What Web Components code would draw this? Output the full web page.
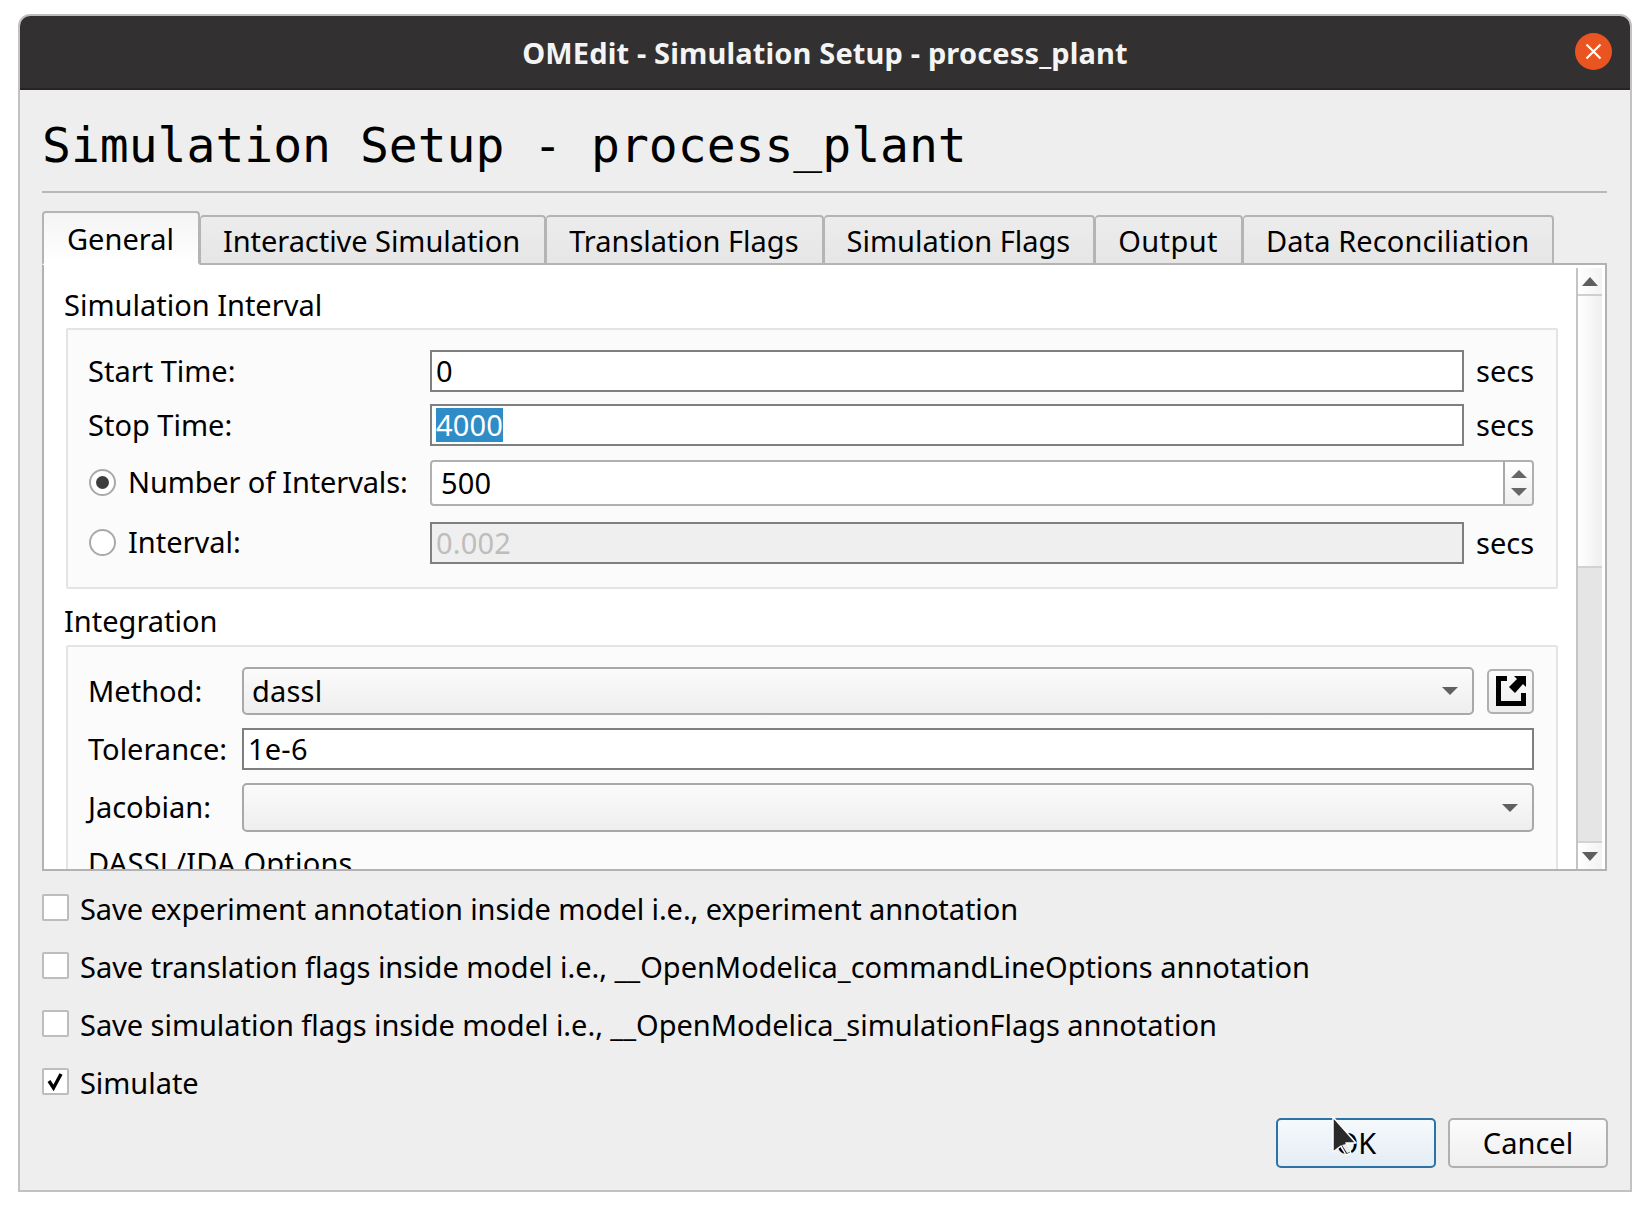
<!DOCTYPE html>
<html>
<head>
<meta charset="utf-8">
<title>OMEdit - Simulation Setup</title>
<style>
  html, body { margin: 0; background: #fff; }
  body { font: 29px "Noto Sans", "Open Sans", sans-serif; color: #000; }
</style>
</head>
<body>
<om-dialog heading="OMEdit - Simulation Setup - process_plant">
  <om-page-title>Simulation Setup - process_plant</om-page-title>
  <om-tabbar>
    <om-tab active>General</om-tab>
    <om-tab style="letter-spacing:-.05px; padding-right:24px">Interactive Simulation</om-tab>
    <om-tab>Translation Flags</om-tab>
    <om-tab>Simulation Flags</om-tab>
    <om-tab style="letter-spacing:.4px">Output</om-tab>
    <om-tab style="letter-spacing:.1px">Data Reconciliation</om-tab>
  </om-tabbar>
  <om-pane>
    <om-section heading="Simulation Interval" style="--cols: 341px 1034px 70px; --pad-bottom: 23px; --gap-y: 12px; --head-lh: 40px">
      <om-label>Start Time:</om-label>
      <om-input value="0"></om-input>
      <om-label class="unit">secs</om-label>
      <om-label>Stop Time:</om-label>
      <om-input value="4000" selected></om-input>
      <om-label class="unit">secs</om-label>
      <om-radio checked style="letter-spacing:-.15px; margin-bottom: 3px">Number of Intervals:</om-radio>
      <om-spin value="500"></om-spin>
      <om-radio style="margin-bottom: 1px">Interval:</om-radio>
      <om-input value="0.002" disabled></om-input>
      <om-label class="unit">secs</om-label>
    </om-section>
    <om-section heading="Integration" style="--cols: 153px 1fr; --gap-y: 13px; margin-top: 13px">
      <om-label>Method:</om-label>
      <om-method-row>
        <om-combo value="dassl" style="--h:48px"></om-combo>
        <om-icon-button></om-icon-button>
      </om-method-row>
      <om-label>Tolerance:</om-label>
      <om-input value="1e-6"></om-input>
      <om-label>Jacobian:</om-label>
      <om-combo style="--h:49px"></om-combo>
      <om-label class="wide">DASSL/IDA Options</om-label>
    </om-section>
  </om-pane>
  <om-checks>
    <om-check style="letter-spacing:-.08px">Save experiment annotation inside model i.e., experiment annotation</om-check>
    <om-check style="letter-spacing:-.025px">Save translation flags inside model i.e., __OpenModelica_commandLineOptions annotation</om-check>
    <om-check style="letter-spacing:-.04px">Save simulation flags inside model i.e., __OpenModelica_simulationFlags annotation</om-check>
    <om-check checked>Simulate</om-check>
  </om-checks>
  <om-buttons>
    <om-button focused>OK</om-button>
    <om-button>Cancel</om-button>
  </om-buttons>
  <om-cursor></om-cursor>
</om-dialog>

<script>
// little helper, every element here is just a shadow root with its own style
function define(name, html) {
  customElements.define(name, class extends HTMLElement {
    constructor() {
      super();
      this.attachShadow({ mode: 'open' });
    }
    connectedCallback() {
      this.shadowRoot.innerHTML = typeof html === 'function' ? html(this) : html;
    }
  });
}

define('om-dialog', el => `
  <style>
    :host { display: block; position: relative; box-sizing: border-box; width: 1614px; height: 1178px; margin: 14px 0 0 18px;
      border: 2px solid #c2c2c2; border-top-color: #bdbdbd; border-radius: 12px 12px 0 0; background: #eee; }
    header { display: flex; align-items: center; justify-content: center; position: relative; box-sizing: border-box; height: 74px; padding-top: 1px;
      background: #323031; border-bottom: 2px solid #262425; border-radius: 10px 10px 0 0;
      color: #f4f4f4; font-weight: 700; font-size: 29px; letter-spacing: .15px; }
    .close { position: absolute; right: 18px; top: 17px; width: 37px; height: 37px; }
    main { display: flex; flex-direction: column; padding: 0 23px 0 22px; }
  </style>
  <header>
    <span>${el.getAttribute('heading')}</span>
    <svg class="close" viewBox="0 0 37 37"><circle cx="18.5" cy="18.5" r="18.5" fill="#e95420"/>
      <path d="M11.5 11.5l14 14M25.5 11.5l-14 14" stroke="#fff" stroke-width="2.2" fill="none"/></svg>
  </header>
  <main><slot></slot></main>`);

define('om-page-title', `
  <style>
    :host { display: block; height: 103px; box-sizing: border-box; padding-top: 25px; border-bottom: 2px solid #b8b8b8;
      font: 48px/60px "DejaVu Sans Mono", monospace; color: #000; white-space: nowrap; }
  </style><slot></slot>`);

define('om-tabbar', `
  <style>
    :host { display: flex; align-items: flex-end; height: 54px; margin: 18px 0 -2px; position: relative; z-index: 1; }
  </style><slot></slot>`);

define('om-tab', `
  <style>
    :host { display: flex; align-items: center; box-sizing: border-box; height: 50px; padding: 0 23px 0 22px;
      border: 2px solid #b4b4b4; border-left-width: 1px; border-radius: 4px 4px 0 0;
      background: linear-gradient(#ececec, #e6e6e6); white-space: nowrap; }
    :host([active]) { height: 54px; padding: 0 24px 0 23px; background: linear-gradient(#f4f4f4, #fff); border-bottom-color: #fff; border-left-width: 2px; }
  </style><slot></slot>`);

define('om-pane', `
  <style>
    :host { display: flex; box-sizing: border-box; height: 608px; border: 2px solid #b2b2b2; background: #fff; overflow: hidden; }
    .body { flex: 1; min-width: 0; padding: 20px 0 0 20px; overflow: hidden; }
    .bar { display: flex; flex-direction: column; box-sizing: border-box; width: 29px; flex: none; margin-top: 3px; padding-right: 3px; border-left: 2px solid #c4c4c4; }
    .btn { display: flex; align-items: center; justify-content: center; height: 26px; flex: none; border-bottom: 2px solid #cfcfcf; background: linear-gradient(90deg, #fff, #f2f2f2); }
    .track { height: 270px; flex: none; background: linear-gradient(90deg, #fff, #efefef); }
    .thumb { flex: 1; background: #e5e5e5; border-top: 2px solid #d2d2d2; }
    .down { border-bottom: 0; border-top: 2px solid #d2d2d2; }
    svg { width: 16px; height: 9px; fill: #5e5e5e; }
  </style>
  <div class="body"><slot></slot></div>
  <div class="bar">
    <div class="btn"><svg viewBox="0 0 16 9"><path d="M8 0l8 9H0z"/></svg></div>
    <div class="track"></div>
    <div class="thumb"></div>
    <div class="btn down"><svg viewBox="0 0 16 9"><path d="M0 0h16l-8 9z"/></svg></div>
  </div>`);

define('om-section', el => `
  <style>
    :host { display: block; margin-right: 18px; }
    h4 { margin: 0; height: 43px; font: inherit; line-height: var(--head-lh, 38px); }
    .box { display: grid; grid-template-columns: var(--cols); row-gap: var(--gap-y, 12px); align-items: center;
      box-sizing: border-box; margin-left: 2px; padding: 20px 22px var(--pad-bottom, 0) 21px;
      border: 2px solid #e4e4e4; border-radius: 2px; background: #fbfbfb; }
  </style>
  <h4>${el.getAttribute('heading')}</h4>
  <div class="box"><slot></slot></div>`);

define('om-label', `
  <style>
    :host { display: block; margin-left: -1px; padding-bottom: 2px; white-space: nowrap; }
    :host(.unit) { margin-left: 0; padding-left: 12px; }
    :host(.wide) { grid-column: 1 / -1; margin-top: -2px; letter-spacing: .2px; }
  </style><slot></slot>`);

define('om-input', el => `
  <style>
    :host { display: block; box-sizing: border-box; height: 42px; border: 2px solid #7f7f7f; background: #fff;
      padding-left: 4px; line-height: 38px; letter-spacing: .2px; }
    :host([disabled]) { background: #efefef; color: #bdbdbd; }
    :host([selected]) span { display: inline-block; height: 34px; line-height: 33px; margin-top: 2px; vertical-align: top; background: #308cc6; color: #fff; }
  </style><span>${el.getAttribute('value')}</span>`);

define('om-spin', el => `
  <style>
    :host { display: flex; grid-column: 2 / 4; box-sizing: border-box; height: 46px; margin: 2px 0 4px; border: 2px solid #b0b0b0; border-radius: 4px; background: #fff; }
    span { flex: 1; padding-left: 9px; line-height: 42px; letter-spacing: .2px; }
    .arrows { display: flex; flex-direction: column; align-items: center; justify-content: center; gap: 10px; width: 27px;
      border-left: 2px solid #a8a8a8; background: linear-gradient(#fff, #efefef); border-radius: 0 3px 3px 0; }
    svg { width: 16px; height: 8px; fill: #666; }
  </style>
  <span>${el.getAttribute('value')}</span>
  <div class="arrows">
    <svg viewBox="0 0 16 8"><path d="M8 0l8 8H0z"/></svg>
    <svg viewBox="0 0 16 8"><path d="M0 0h16l-8 8z"/></svg>
  </div>`);

define('om-radio', `
  <style>
    :host { display: flex; align-items: center; gap: 13px; white-space: nowrap; }
    i { display: flex; align-items: center; justify-content: center; box-sizing: border-box; width: 27px; height: 27px; border: 2px solid #a9a9a9; border-radius: 50%; background: #fff; }
    :host([checked]) i::after { content: ""; width: 13px; height: 13px; border-radius: 50%; background: #3d3d3d; }
    span { padding-bottom: 2px; margin-left: -1px; }
  </style><i></i><span><slot></slot></span>`);

define('om-combo', el => `
  <style>
    :host { display: flex; flex: 1; align-items: center; justify-content: space-between; box-sizing: border-box; height: var(--h, 48px);
      padding: 0 14px 0 8px; border: 2px solid #a8a8a8; border-radius: 5px; background: linear-gradient(#fbfbfb, #eee); letter-spacing: .2px; }
    span { padding-bottom: 2px; }
    svg { width: 16px; height: 8px; fill: #606060; }
  </style>
  <span>${el.getAttribute('value') || ''}</span>
  <svg viewBox="0 0 16 8"><path d="M0 0h16l-8 8z"/></svg>`);

define('om-method-row', `
  <style>:host { display: flex; align-items: center; gap: 13px; }</style><slot></slot>`);

define('om-icon-button', `
  <style>
    :host { display: flex; align-items: center; justify-content: center; box-sizing: border-box; width: 47px; height: 45px; flex: none;
      border: 2px solid #b0b0b0; border-radius: 5px; background: linear-gradient(#fbfbfb, #eee); }
    svg { width: 30px; height: 30px; }
  </style>
  <svg viewBox="0 0 30 30">
    <path d="M0 0h11v5H5v20h20V17h5v13H0z"/>
    <path d="M18 0h12v11l-3-3-8 9-6-6 8-8z"/>
  </svg>`);

define('om-checks', `
  <style>
    :host { display: flex; flex-direction: column; gap: 31px; padding-top: 23px; }
  </style><slot></slot>`);

define('om-check', `
  <style>
    :host { display: flex; align-items: center; gap: 11px; height: 27px; letter-spacing: -.05px; white-space: nowrap; }
    i { display: block; box-sizing: border-box; width: 27px; height: 27px; flex: none; border: 2px solid #bdbdbd; border-radius: 2px; background: #fff; }
    svg { display: none; width: 23px; height: 23px; }
    :host([checked]) svg { display: block; }
    span { padding-top: 2px; }
  </style>
  <i><svg viewBox="0 0 23 23"><path d="M5 11l4.500 7L17 4" fill="none" stroke="#000" stroke-width="3.400"/></svg></i><span><slot></slot></span>`);

define('om-buttons', `
  <style>
    :host { display: flex; justify-content: flex-end; gap: 12px; padding-top: 23px; margin-right: -1px; }
  </style><slot></slot>`);

define('om-button', `
  <style>
    :host { display: flex; align-items: center; justify-content: center; box-sizing: border-box; width: 160px; height: 50px; padding-bottom: 2px;
      border: 2px solid #b0b0b0; border-radius: 5px; background: linear-gradient(#fbfbfb, #efefef); }
    :host([focused]) { border-color: #2a73a4; background: linear-gradient(#f6f9fc, #e4edf5); }
  </style><slot></slot>`);

// mouse pointer lying over the OK button
define('om-cursor', `
  <style>
    :host { display: block; position: absolute; left: 1311px; top: 1099px; width: 30px; height: 44px; pointer-events: none; }
    svg { display: block; width: 100%; height: 100%; }
  </style>
  <svg viewBox="0 0 30 44">
    <path d="M2 2v35l8-6 5 9 5-2-5-10h10z" fill="#2a2a2a" stroke="#fff" stroke-width="1.500" stroke-linejoin="round"/>
    <path d="M11 30l4-1 4 8-3 1z" fill="#eee"/>
  </svg>`);
</script>
</body>
</html>
